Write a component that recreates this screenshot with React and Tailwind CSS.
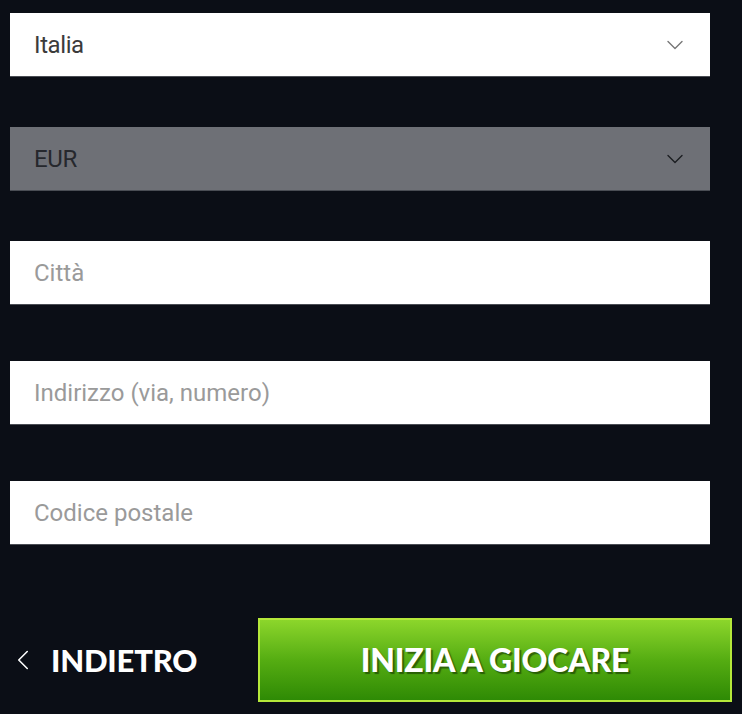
import { ChevronDown, ChevronLeft } from "lucide-react"

function SelectField({ value, disabled }) {
  return (
    <div
      className={`h-16 w-[700px] flex items-center justify-between pl-6 pr-[21px] border-b border-[#4a4d54] ${
        disabled ? "bg-[#6e7076] text-[#26282d]" : "bg-white text-[#3b3b3b]"
      }`}
    >
      <span className="text-[24px] font-['Roboto',sans-serif] tracking-[-0.4px]">{value}</span>
      <ChevronDown
        size={28}
        strokeWidth={1.2}
        className={disabled ? "text-[#1c1e22]" : "text-[#777]"}
      />
    </div>
  )
}

function TextField({ placeholder }) {
  return (
    <div className="h-16 w-[700px] flex items-center pl-6 bg-white border-b border-[#4a4d54]">
      <span className="text-[24px] font-['Roboto',sans-serif] text-[#9a9a9a]">{placeholder}</span>
    </div>
  )
}

export default function App() {
  return (
    <div className="min-h-screen w-[742px] h-[714px] bg-[#0b0e16] pl-[10px] pt-[13px] font-['Roboto',sans-serif]">
      <div className="flex flex-col gap-[50px]">
        <SelectField value="Italia" />
        <SelectField value="EUR" disabled />
        <TextField placeholder="Città" />
      </div>
      <div className="flex flex-col gap-[56px] mt-[56px]">
        <TextField placeholder="Indirizzo (via, numero)" />
        <TextField placeholder="Codice postale" />
      </div>

      {/* azioni */}
      <div className="flex items-center mt-[73px]">
        <button className="flex items-center gap-[11px] -ml-1 text-white">
          <ChevronLeft size={34} strokeWidth={1.1} />
          <span className="text-[31px] font-black font-['Lato',sans-serif] tracking-[-0.2px]">INDIETRO</span>
        </button>
        <button className="ml-auto mr-[10px] h-[84px] w-[474px] border-2 border-[#b6e83a] bg-gradient-to-b from-[#8cd62b] via-[#55ad12] to-[#2e8a05] flex items-center justify-center">
          <span className="text-[32px] font-black font-['Lato',sans-serif] text-white tracking-[-0.2px] [text-shadow:2px_2px_1px_rgba(20,50,0,0.6)]">
            INIZIA A GIOCARE
          </span>
        </button>
      </div>
    </div>
  )
}
